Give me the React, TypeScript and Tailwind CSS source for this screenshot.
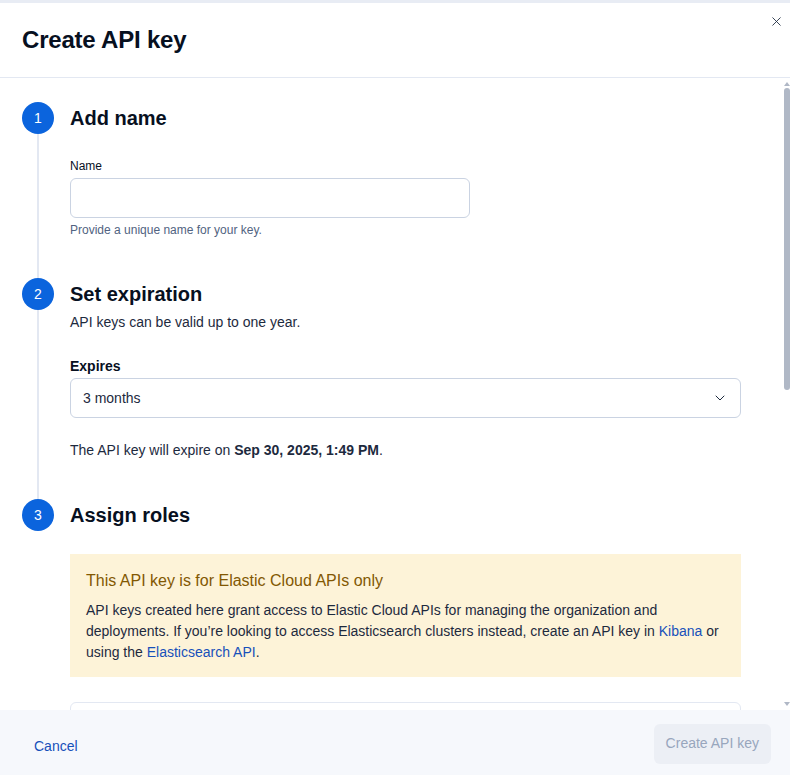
import { X, ChevronDown } from "lucide-react";

// ================= STEP =================
function Step({
  num,
  title,
  last,
  pb,
  children,
}: {
  num: number;
  title: string;
  last?: boolean;
  pb?: string;
  children: React.ReactNode;
}) {
  return (
    <div className="flex gap-4">
      <div className="flex flex-col items-center w-8 shrink-0">
        <div className="w-8 h-8 rounded-full bg-[#0b64dd] text-white text-[14px] font-medium flex items-center justify-center">
          {num}
        </div>
        {!last && <div className="flex-1 w-[2px] bg-[#e3e8f2]" />}
      </div>
      <div className={`flex-1 min-w-0 ${pb ?? ""}`}>
        <h2 className="h-8 flex items-center text-[20px] font-bold text-[#07101f]">
          {title}
        </h2>
        {children}
      </div>
    </div>
  );
}

// ================= MAIN =================
export default function App() {
  return (
    <div
      className="h-[775px] w-[790px] flex flex-col bg-white border-t-[3px] border-[#e8ecf4] text-[#1d2a3e] relative overflow-hidden"
      style={{ fontFamily: '"Liberation Sans", Arial, sans-serif' }}
    >
      {/* HEADER */}
      <div className="h-[75px] shrink-0 flex items-center px-[22px] border-b border-[#e3e8f2]">
        <h1 className="text-[24px] font-bold text-[#07101f] tracking-[-0.2px]">
          Create API key
        </h1>
      </div>
      <button className="absolute top-[6px] right-[2px] w-6 h-6 flex items-center justify-center text-[#1d2a3e]">
        <X className="w-[15px] h-[15px]" strokeWidth={1.4} />
      </button>

      {/* BODY */}
      <div className="flex-1 min-h-0 overflow-hidden relative">
        <div className="pl-[22px] pr-[49px] pt-[24px]">
          <Step num={1} title="Add name" pb="pb-[40px]">
            <div className="pt-[24px] w-[400px]">
              <label className="block text-[12px] leading-4 font-medium text-[#07101f]">
                Name
              </label>
              <input
                className="mt-[4px] w-full h-10 rounded-[6px] border border-[#cad3e2] bg-white px-3 text-[14px] outline-none"
                type="text"
              />
              <p className="mt-[4px] text-[12px] leading-4 text-[#516381]">
                Provide a unique name for your key.
              </p>
            </div>
          </Step>

          <Step num={2} title="Set expiration" pb="pb-[39px]">
            <p className="mt-[2px] text-[14px] leading-5">
              API keys can be valid up to one year.
            </p>
            <label className="block mt-[24px] text-[14px] leading-5 font-bold text-[#07101f]">
              Expires
            </label>
            <div className="mt-[2px] h-10 rounded-[6px] border border-[#cad3e2] bg-white flex items-center justify-between pl-3 pr-3">
              <span className="text-[14px]">3 months</span>
              <ChevronDown className="w-4 h-4 text-[#1d2a3e]" strokeWidth={1.5} />
            </div>
            <p className="mt-[22px] text-[14px] leading-5">
              The API key will expire on{" "}
              <span className="font-bold">Sep 30, 2025, 1:49 PM</span>.
            </p>
          </Step>

          <Step num={3} title="Assign roles" last>
            <div className="mt-[23px] bg-[#fdf3d8] px-4 pt-[15px] pb-[14px]">
              <p className="text-[16px] leading-6 text-[#825803]">
                This API key is for Elastic Cloud APIs only
              </p>
              <p className="mt-[7px] text-[14px] leading-[21px]">
                API keys created here grant access to Elastic Cloud APIs for
                managing the organization and deployments. If you’re looking to
                access Elasticsearch clusters instead, create an API key in{" "}
                <span className="text-[#1750ba]">Kibana</span> or using the{" "}
                <span className="text-[#1750ba]">Elasticsearch API</span>.
              </p>
            </div>
            <div className="mt-[25px] h-[60px] rounded-[6px] border border-[#e3e8f2]" />
          </Step>
        </div>

        {/* SCROLLBAR */}
        <div className="absolute right-0 top-0 bottom-0 w-[7px]">
          <div className="absolute top-[4px] right-[0px] w-0 h-0 border-l-[3px] border-r-[3px] border-b-[4px] border-l-transparent border-r-transparent border-b-[#b0b8c6]" />
          <div className="absolute top-[10px] right-0 w-[6px] h-[302px] rounded-[3px] bg-[#b0b8c6]" />
          <div className="absolute bottom-[4px] right-[0px] w-0 h-0 border-l-[3px] border-r-[3px] border-t-[4px] border-l-transparent border-r-transparent border-t-[#b0b8c6]" />
        </div>
      </div>

      {/* FOOTER */}
      <div className="h-[65px] shrink-0 bg-[#f6f8fc] flex items-center justify-between pl-[34px] pr-[19px]">
        <span className="text-[14px] text-[#1750ba] mt-[8px]">Cancel</span>
        <button
          disabled
          className="mt-[2px] h-10 px-3 rounded-[6px] bg-[#eceff5] text-[14px] text-[#98a6bd]"
        >
          Create API key
        </button>
      </div>
    </div>
  );
}
